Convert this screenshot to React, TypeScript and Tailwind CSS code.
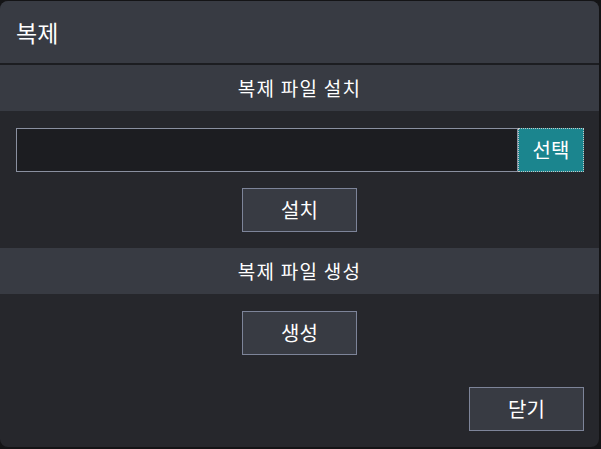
export default function App() {
  const font = { fontFamily: '"Noto Sans CJK KR", "Noto Sans", sans-serif' }
  return (
    <div className="h-[449px] w-[601px] bg-[#141416] pt-px" style={font}>
      <div className="flex h-[446px] w-[599px] flex-col overflow-hidden rounded-lg bg-[#26272c] text-white">
        <div className="flex h-[64px] shrink-0 items-center border-b-2 border-[#1c1d21] bg-[#383b43] px-4 text-[23px]">
          복제
        </div>
        <div className="flex h-[46px] shrink-0 items-center justify-center bg-[#383b43] text-[19px] tracking-[1.25px]">
          복제 파일 설치
        </div>
        <div className="flex flex-col pt-[17px] pb-4">
          <div className="flex h-11 pr-[15px] pl-4">
            <input className="h-full flex-1 border border-[#8a90a0] bg-[#1c1d21] outline-none" />
            <button className="h-full w-[66px] border border-dotted border-[#c8c8c8] bg-[#1b858e] text-[20px]">
              선택
            </button>
          </div>
          <div className="mt-4 flex justify-center">
            <button className="h-11 w-[115px] border border-[#7d8499] bg-[#383b43] text-[20px]">
              설치
            </button>
          </div>
        </div>
        <div className="flex h-[46px] shrink-0 items-center justify-center bg-[#383b43] text-[19px] tracking-[1.25px]">
          복제 파일 생성
        </div>
        <div className="flex justify-center pt-[17px]">
          <button className="h-11 w-[115px] border border-[#7d8499] bg-[#383b43] text-[20px]">
            생성
          </button>
        </div>
        <div className="flex justify-end pt-8 pr-[15px]">
          <button className="h-11 w-[115px] border border-[#7d8499] bg-[#383b43] text-[20px]">
            닫기
          </button>
        </div>
      </div>
    </div>
  )
}
